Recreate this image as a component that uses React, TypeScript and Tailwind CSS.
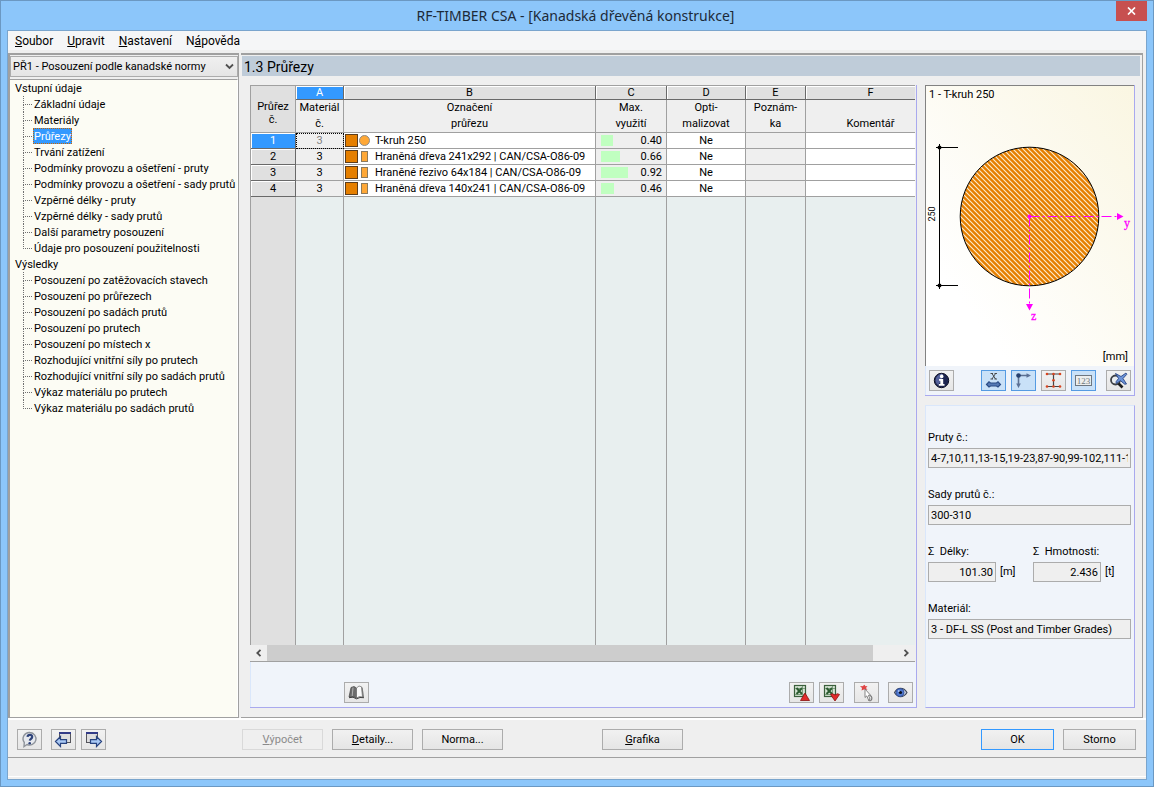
import React, { ReactNode, useState } from 'react';

const inputData = [
  'Základní údaje',
  'Materiály',
  'Průřezy',
  'Trvání zatížení',
  'Podmínky provozu a ošetření - pruty',
  'Podmínky provozu a ošetření - sady prutů',
  'Vzpěrné délky - pruty',
  'Vzpěrné délky - sady prutů',
  'Další parametry posouzení',
  'Údaje pro posouzení použitelnosti',
];

const results = [
  'Posouzení po zatěžovacích stavech',
  'Posouzení po průřezech',
  'Posouzení po sadách prutů',
  'Posouzení po prutech',
  'Posouzení po místech x',
  'Rozhodující vnitřní síly po prutech',
  'Rozhodující vnitřní síly po sadách prutů',
  'Výkaz materiálu po prutech',
  'Výkaz materiálu po sadách prutů',
];

const sections = [
  { material: 3, name: 'T-kruh 250', round: true, ratio: 0.4 },
  { material: 3, name: 'Hraněná dřeva 241x292 | CAN/CSA-O86-09', round: false, ratio: 0.66 },
  { material: 3, name: 'Hraněné řezivo 64x184 | CAN/CSA-O86-09', round: false, ratio: 0.92 },
  { material: 3, name: 'Hraněná dřeva 140x241 | CAN/CSA-O86-09', round: false, ratio: 0.46 },
];

const columns = [
  { letter: 'A', top: 'Materiál', bottom: 'č.' },
  { letter: 'B', top: 'Označení', bottom: 'průřezu' },
  { letter: 'C', top: 'Max.', bottom: 'využití' },
  { letter: 'D', top: 'Opti-', bottom: 'malizovat' },
  { letter: 'E', top: 'Poznám-', bottom: 'ka' },
  { letter: 'F', top: '\u00a0', bottom: 'Komentář' },
];

type IconButtonProps = {
  label: string;
  active?: boolean;
  className?: string;
  children: ReactNode;
};

const IconButton: React.FC<IconButtonProps> = ({ label, active = false, className = '', children }) => (
  <button
    type="button"
    aria-label={label}
    className={`flex h-[21px] w-[25px] shrink-0 items-center justify-center border ${
      active ? 'border-[#559be2] bg-[#c9e1f8]' : 'border-[#acacac] bg-linear-to-b from-[#f2f2f2] to-[#e6e6e6]'
    } ${className}`}
  >
    {children}
  </button>
);

type TextButtonProps = {
  className?: string;
  disabled?: boolean;
  primary?: boolean;
  children: ReactNode;
};

const TextButton: React.FC<TextButtonProps> = ({ className = '', disabled = false, primary = false, children }) => {
  const enabledBorder = primary ? 'border-[#3399ff]' : 'border-[#acacac]';

  return (
    <button
      type="button"
      disabled={disabled}
      className={`h-[21px] shrink-0 border text-center leading-5 ${
        disabled
          ? 'border-[#d9d9d9] bg-[#efefef] text-[#8a8a8a]'
          : `${enabledBorder} bg-linear-to-b from-[#f1f1f1] to-[#e5e5e5] text-black`
      } ${className}`}
    >
      {children}
    </button>
  );
};

/* Toolbar icons */

const InfoIcon = () => (
  <svg width="17" height="17" viewBox="0 0 17 17">
    <circle cx="8.5" cy="8.5" r="7.2" fill="#1d2550" stroke="#0c0f24" />
    <path d="M3 6a6 6 0 0 1 7-4l-2 7-3 4a6 6 0 0 1-2-7z" fill="#56639b" />
    <circle cx="8.7" cy="4.4" r="1.8" fill="#fff" />
    <path d="M6 7h4.200v5h1.300v1.800H5.800V12h1.500V8.800H6z" fill="#fff" />
  </svg>
);

const SupportXIcon = () => (
  <svg width="17" height="17" viewBox="0 0 17 17">
    <path d="M5.500 1.500h2.500M9.500 1.500h2.500M7 1.500l3.500 5.500M10.500 1.500L7 7M5.500 7h2.500M9.500 7h2.500" stroke="#3c3c3c" fill="none" strokeWidth=".9" />
    <path d="M1.500 12.500L4 9.800l1.500 1.200h6L13 9.800l2.500 2.700L13 15l-1.500-1h-6L4 15z" fill="#5579b4" stroke="#2b4c86" strokeWidth="1.200" />
  </svg>
);

const AxesIcon = () => (
  <svg width="17" height="17" viewBox="0 0 17 17">
    <path d="M3.500 3.500h9M3.500 3.500v9" stroke="#5c7192" strokeWidth="1.600" />
    <path d="M11.500 1.200L16 3.500 11.500 5.800zM1.200 11.500L3.500 16 5.800 11.500z" fill="#5b7196" />
    <circle cx="3.500" cy="3.500" r="2.300" fill="#27416f" />
  </svg>
);

const SectionIcon = () => (
  <svg width="17" height="17" viewBox="0 0 17 17">
    <path d="M1.500 2h14M1.500 14.500h14M8.500 2v12.500" stroke="#454545" strokeWidth="1.200" />
    <g fill="#d8441f">
      <circle cx="2" cy="2" r="1.300" />
      <circle cx="8.500" cy="2" r="1.300" />
      <circle cx="15" cy="2" r="1.300" />
      <circle cx="8.500" cy="8.300" r="1.300" />
      <circle cx="2" cy="14.500" r="1.300" />
      <circle cx="8.500" cy="14.500" r="1.300" />
      <circle cx="15" cy="14.500" r="1.300" />
    </g>
  </svg>
);

const NumbersIcon = () => (
  <svg width="17" height="13" viewBox="0 0 17 13">
    <rect x=".5" y="1.500" width="16" height="10" fill="#eceeee" stroke="#6d7680" />
    <text x="8.500" y="10" textAnchor="middle" fontSize="9" fill="#6d767e" className="font-['Liberation_Serif',serif]">
      123
    </text>
  </svg>
);

const ZoomAllIcon = () => (
  <svg width="19" height="17" viewBox="0 0 19 17">
    <circle cx="6.500" cy="8" r="4.500" fill="#e9edf0" stroke="#3c3f44" strokeWidth="1.800" />
    <path d="M9.500 11.500l4 4" stroke="#1c1c1c" strokeWidth="2.600" />
    <path d="M6.500 1.500l5.500 3 5-3.500.8 1.300-3.800 4.200 3.500 5.500-1.800.2-4.200-3.500-4.200 2.800-.3-1.700 2.500-3.300z" fill="#6d94d8" stroke="#2a4685" strokeWidth=".9" />
  </svg>
);

const LibraryIcon = () => (
  <svg width="17" height="15" viewBox="0 0 17 15">
    <path d="M1 12L3 2.500l3-1 2.500 1.500V13L5 11.500z" fill="#6d6d6d" stroke="#444" strokeWidth=".7" />
    <path d="M5 2.500L4.200 11" stroke="#b5b5b5" />
    <path d="M8.500 3l2.500-2 2.500.8L14.500 12l-3-.5-3 1.500z" fill="#fafafa" stroke="#666" strokeWidth=".7" />
    <path d="M13.500 2l1.200.8L16 12l-1.500.2z" fill="#777" />
    <path d="M1 12.700l4-.5 3.500 1.600L12 12.500l4 .2" stroke="#3e3e3e" fill="none" />
  </svg>
);

const ExcelIcon = ({ down = false }: { down?: boolean }) => (
  <svg width="18" height="18" viewBox="0 0 18 18">
    <rect x="1.500" y="1.500" width="11" height="11" fill="#d5e3d3" stroke="#3a5f3c" strokeWidth="1.200" />
    <path d="M2 4.500h10M2 10.500h10M9.500 2v10" stroke="#7f9f80" />
    <path d="M3.500 4l5.500 6M9 4l-5.500 6" stroke="#2c5c31" strokeWidth="1.900" />
    {down ? (
      <path d="M7.500 10.500l2-.8 2.500 1.300 2.500-1.300 2 .8L12 17z" fill="#e02b2b" stroke="#8c1010" strokeWidth=".8" />
    ) : (
      <path d="M12 9l4.500 7.500h-9z" fill="#e02b2b" stroke="#8c1010" strokeWidth=".8" />
    )}
  </svg>
);

const PickIcon = () => (
  <svg width="17" height="18" viewBox="0 0 17 18">
    <path d="M2 2l2.500.3L6.500.8l1 1.500 2-.3-1.500 2L9.500 6 6.500 5.300 3.500 6.500 4 4z" fill="#e04545" />
    <path d="M7 5v8.500l1.800-1.600 1.700 4 1.500-.8-1.600-3.800h2.200z" fill="#fff" stroke="#6a6a6a" strokeWidth=".8" />
    <path d="M12 11.500c2.200.8 2.500 3.500.8 5-1 .5-2 .3-2.300-.6" stroke="#777" fill="none" strokeWidth="1.200" />
  </svg>
);

const EyeIcon = () => (
  <svg width="15" height="13" viewBox="0 0 15 13">
    <path d="M1.500 6.500C3.500 3.200 5 2.300 7.500 2.300S12 3.200 14 6.500C12 9.800 10 10.700 7.500 10.700S3.500 9.800 1.500 6.500z" fill="#c3cbdb" stroke="#3a4254" strokeWidth="1.100" />
    <circle cx="7" cy="6.500" r="4" fill="#4f79d0" stroke="#2c4a93" strokeWidth=".8" />
    <circle cx="7.500" cy="6.500" r="1.600" fill="#0b1020" />
    <circle cx="5.800" cy="5" r=".8" fill="#dbe8ff" />
  </svg>
);

const HelpIcon = () => (
  <svg width="17" height="17" viewBox="0 0 17 17">
    <path d="M9 1.500a6.300 6.300 0 1 1-3 12L3 15.500l.3-4A6.300 6.300 0 0 1 9 1.500z" fill="#e6e9ee" stroke="#8f949b" strokeWidth="1.400" />
    <path d="M6.500 5.800C6.800 3.200 11.300 3.200 11.200 5.900 11.100 7.800 8.900 7.800 8.800 9.600" stroke="#2f437a" strokeWidth="2.200" fill="none" />
    <circle cx="8.700" cy="12.300" r="1.300" fill="#2f437a" />
  </svg>
);

const WindowArrowIcon = ({ forward = false }: { forward?: boolean }) => (
  <svg width="19" height="17" viewBox="0 0 19 17">
    <rect x={forward ? 2.5 : 5.5} y="1.500" width="11" height="10" fill="#dededf" stroke="#55555c" />
    <path d={forward ? 'M2 2h12' : 'M5 2h12'} stroke="#333c88" strokeWidth="2" />
    <path
      d={forward ? 'M17.500 10.500L12.500 5.500v3.200H6.500v3.600h6V15.500z' : 'M1.500 10.500l5-5v3.200h6v3.600h-6V15.500z'}
      fill="#a9c9f5"
      stroke="#28437f"
      strokeWidth="1.200"
    />
  </svg>
);

/* Cross-section preview: a round timber section with its diameter and local axes */
const SectionDrawing = () => (
  <svg viewBox="0 0 208 246" className="min-h-0 w-full flex-1" role="img" aria-label="T-kruh 250">
    <defs>
      <pattern id="hatch" width="5" height="5" patternUnits="userSpaceOnUse">
        <rect width="5" height="5" fill="#e57f00" />
        <path d="M-1-1l7 7M-1 4l2 2M4-1l2 2" stroke="#ffedd0" strokeWidth="1.100" />
      </pattern>
    </defs>
    <circle cx="103.500" cy="114.500" r="69.300" fill="url(#hatch)" stroke="#000" />
    <path d="M13.500 42v145M10 45.500h22M10 183.500h22" stroke="#000" fill="none" />
    <circle cx="13.500" cy="45.500" r="2" />
    <circle cx="13.500" cy="183.500" r="2" />
    <text transform="translate(9 112) rotate(-90)" textAnchor="middle" fontSize="9">
      250
    </text>
    <g stroke="#f0f" fill="none" strokeDasharray="10 3 2 3">
      <path d="M103.500 114.500h88M103.500 114.500v90" />
    </g>
    <g fill="#f0f">
      <circle cx="103.500" cy="114.500" r="2" />
      <path d="M191 111l6.500 3.500-6.500 3.500zM100 202h7l-3.500 6.500z" />
      <g fontSize="12" stroke="#f0f" strokeWidth=".3" className="font-['Liberation_Serif',serif]">
        <text x="198" y="125">y</text>
        <text x="105" y="218">z</text>
      </g>
    </g>
  </svg>
);

type TreeBranchProps = {
  title: string;
  items: string[];
  selected: string;
  onSelect: (item: string) => void;
};

const TreeBranch: React.FC<TreeBranchProps> = ({ title, items, selected, onSelect }) => (
  <li>
    <div className="h-4 pl-[5px] leading-[18px]">{title}</div>
    <ul className="pl-[13px]">
      {items.map((item, i) => (
        <li key={item} className="flex h-4">
          <span className="w-[9px] shrink-0">
            <span className="block h-[9px] border-b border-l border-dotted border-[#707070]" />
            {i < items.length - 1 && <span className="block h-[7px] border-l border-dotted border-[#707070]" />}
          </span>
          <a
            href="#"
            onClick={(e) => {
              e.preventDefault();
              onSelect(item);
            }}
            className={`ml-px h-4 border border-dotted leading-4 whitespace-nowrap ${
              item === selected ? 'border-[#cc6600] bg-[#3399ff] text-white' : 'border-transparent'
            }`}
          >
            {item}
          </a>
        </li>
      ))}
    </ul>
  </li>
);

type FieldProps = {
  id: string;
  label: string;
  value: string;
  unit?: string;
};

const Field: React.FC<FieldProps> = ({ id, label, value, unit }) => (
  <div className={unit ? 'w-[105px] shrink-0' : 'w-full'}>
    <label htmlFor={id} className="mb-[2px] block h-[17px] leading-[18px] whitespace-pre">{label}</label>
    <div className="flex items-center gap-1">
      <input
        id={id}
        readOnly
        value={value}
        className={`h-5 border border-[#acacac] bg-[#efefef] px-[2px] ${unit ? 'w-[68px] text-right' : 'w-full'}`}
      />
      {unit && <span>[{unit}]</span>}
    </div>
  </div>
);

const SectionsTable: React.FC = () => {
  const cell = 'h-4 border-b border-r border-[#a0a0a0] p-0';

  return (
    <table className="h-full w-full table-fixed border-separate border-spacing-0 border-t border-l border-[#a0a0a0] bg-[#e8efef]">
      <colgroup>
        <col className="w-[45px]" />
        <col className="w-[48px]" />
        <col className="w-[252px]" />
        <col className="w-[71px]" />
        <col className="w-[79px]" />
        <col className="w-[60px]" />
        <col />
      </colgroup>
      <thead>
        <tr>
          <th rowSpan={2} className="border-r border-b border-[#a0a0a0] bg-[#e0e0e0] p-0 pt-2 leading-[13px] font-normal">
            Průřez<br />č.
          </th>
          {columns.map((col) => (
            <th
              key={col.letter}
              className={`h-[14px] border-b border-[#696969] p-0 leading-[13px] font-normal shadow-[inset_1px_1px_0_#fff] ${
                col.letter === 'A' ? 'bg-[#3399ff] text-white' : 'bg-[#e0e0e0]'
              } ${col.letter === 'F' ? 'pl-5' : 'border-r'}`}
            >
              {col.letter}
            </th>
          ))}
        </tr>
        <tr>
          {columns.map((col) => (
            <th
              key={col.letter}
              className={`h-[33px] border-b border-[#a0a0a0] bg-[#efefef] p-0 leading-4 font-normal ${
                col.letter === 'F' ? 'pl-5' : 'border-r'
              }`}
            >
              {col.top}<br />{col.bottom}
            </th>
          ))}
        </tr>
      </thead>
      <tbody>
        {sections.map((row, i) => (
          <tr key={i}>
            <th
              scope="row"
              className={`h-4 border-r border-b border-[#696969] p-0 leading-[15px] font-normal shadow-[inset_1px_1px_0_#fff] ${
                i === 0 ? 'bg-[#3399ff] text-white' : 'bg-[#e0e0e0]'
              }`}
            >
              {i + 1}
            </th>
            <td
              className={`${cell} bg-[#efefef] text-center leading-[15px] ${
                i === 0 ? 'text-[#808080] outline-1 -outline-offset-1 outline-black outline-dotted' : ''
              }`}
            >
              {row.material}
            </td>
            <td className={`${cell} bg-white`}>
              <div className="flex h-[15px] items-center pl-px leading-[15px] whitespace-nowrap">
                <span className="h-[13px] w-[13px] border border-[#5c3d1c] bg-[#e57f00]" />
                <span className="flex w-[17px] pl-px">
                  {row.round ? (
                    <span className="h-[11px] w-[11px] rounded-full border border-[#8c8c8c] bg-[#ffa836]" />
                  ) : (
                    <span className="ml-[2px] h-[11px] w-[7px] border border-[#8c7a5c] bg-[#ffa836]" />
                  )}
                </span>
                {row.name}
              </div>
            </td>
            <td className={`${cell} bg-[#efefef]`}>
              <div className="flex h-[15px] items-center justify-between pr-1 pl-[5px] leading-[15px]">
                <span className="h-[11px] bg-[#c0ffc0]" style={{ width: Math.round(row.ratio * 29) }} />
                {row.ratio.toFixed(2)}
              </div>
            </td>
            <td className={`${cell} bg-white text-center leading-[15px]`}>Ne</td>
            <td className={`${cell} bg-[#efefef]`} />
            <td className="h-4 border-b border-[#a0a0a0] bg-white p-0" />
          </tr>
        ))}
        {/* empty rest of the grid */}
        <tr>
          <td className="border-r border-[#a0a0a0] bg-[#e0e0e0] p-0" />
          {columns.map((col) => (
            <td key={col.letter} className={`border-[#a0a0a0] p-0 ${col.letter === 'F' ? '' : 'border-r'}`} />
          ))}
        </tr>
      </tbody>
    </table>
  );
};

const App: React.FC = () => {
  const [selected, setSelected] = useState('Průřezy');

  return (
    <div className="flex h-screen w-full flex-col border border-[#6b98c2] bg-[#8cc6fa] px-[6px] pb-[6px] font-['Roboto','Liberation_Sans',sans-serif] text-[11px] leading-4 text-black">
      <header className="flex h-[29px] shrink-0 items-start">
        <h1 className="flex-1 pl-7 text-center font-['Noto_Sans',sans-serif] text-[14px] leading-[29px] text-[#1c2a38]">
          RF-TIMBER CSA - [Kanadská dřevěná konstrukce]
        </h1>
        <button type="button" aria-label="Zavřít" className="flex h-5 w-[31px] items-center justify-center bg-[#c75050]">
          <svg width="9" height="8" viewBox="0 0 9 8">
            <path d="M1 .5l7 7M8 .5l-7 7" stroke="#fff" strokeWidth="1.700" />
          </svg>
        </button>
      </header>

      <div className="flex min-h-0 flex-1 flex-col border border-[#7aa5cd] bg-[#efefef]">
        <nav className="flex h-[19px] shrink-0 gap-[14px] bg-[#f5f6f7] pl-[7px] text-[12px] leading-[20px]">
          <a href="#"><u>S</u>oubor</a>
          <a href="#"><u>U</u>pravit</a>
          <a href="#"><u>N</u>astavení</a>
          <a href="#">N<u>á</u>pověda</a>
        </nav>

        <div className="flex min-h-0 flex-1 gap-[2px] border-b-2 border-white pt-[3px] pr-[3px]">
          <aside className="flex w-[231px] shrink-0 flex-col border-t-2 border-r border-b border-l-2 border-[#a0a0a0]">
            <div className="relative mt-px">
              <select
                aria-label="Případ posouzení"
                className="block h-[21px] w-full appearance-none border border-[#acacac] bg-linear-to-b from-[#f0f0f0] to-[#e5e5e5] pt-px pl-[2px] outline-none"
              >
                <option>PŘ1 - Posouzení podle kanadské normy</option>
              </select>
              <svg width="9" height="7" viewBox="0 0 9 7" className="pointer-events-none absolute top-[7px] right-1">
                <path d="M1 1.500l3.500 3.500L8 1.500" stroke="#505050" strokeWidth="1.800" fill="none" />
              </svg>
            </div>
            <ul className="mt-[2px] flex-1 border-t border-r border-[#a0a0a0] border-r-white bg-[#fcfcf4]">
              <TreeBranch title="Vstupní údaje" items={inputData} selected={selected} onSelect={setSelected} />
              <TreeBranch title="Výsledky" items={results} selected={selected} onSelect={setSelected} />
            </ul>
          </aside>

          <main className="flex min-w-0 flex-1 flex-col border-t-2 border-r border-b border-[#a0a0a0]">
            <h2 className="mt-px mr-[2px] ml-px h-5 shrink-0 bg-[#bfccd9] pl-[2px] text-[14px] leading-[22px]">1.3 Průřezy</h2>
            <div className="mt-[9px] mb-[9px] flex min-h-0 flex-1 gap-2 pr-[7px] pl-[9px]">
              <section className="flex min-w-0 flex-1 flex-col border-r border-b border-[#a9a9ee]">
                <div className="min-h-0 flex-1 pr-px">
                  <SectionsTable />
                </div>
                <div className="mr-px flex h-[17px] shrink-0 border-b border-[#a0a0a0]">
                  <button type="button" aria-label="Posunout doleva" className="flex w-[17px] shrink-0 items-center justify-center">
                    <svg width="7" height="8" viewBox="0 0 7 8">
                      <path d="M5.500.8L2.300 4l3.200 3.200" stroke="#505050" strokeWidth="1.800" fill="none" />
                    </svg>
                  </button>
                  <div className="flex-1"><div className="h-full w-[96%] bg-[#cdcdcd]" /></div>
                  <button type="button" aria-label="Posunout doprava" className="flex w-[17px] shrink-0 items-center justify-center">
                    <svg width="7" height="8" viewBox="0 0 7 8">
                      <path d="M1.500.8L4.700 4 1.500 7.200" stroke="#505050" strokeWidth="1.800" fill="none" />
                    </svg>
                  </button>
                </div>
                <div className="flex h-[45px] shrink-0 border-l border-[#dae7fb] bg-[#f0f4fa] pt-5 pr-[3px] pl-[93px]">
                  <IconButton label="Knihovna průřezů"><LibraryIcon /></IconButton>
                  <IconButton label="Export do Excelu" className="ml-auto"><ExcelIcon /></IconButton>
                  <IconButton label="Import z Excelu" className="ml-[5px]"><ExcelIcon down /></IconButton>
                  <IconButton label="Vybrat v grafice" className="ml-[10px]"><PickIcon /></IconButton>
                  <IconButton label="Zobrazit" className="ml-[9px]"><EyeIcon /></IconButton>
                </div>
              </section>

              <aside className="flex w-[210px] shrink-0 flex-col gap-[9px]">
                <section className="flex h-[311px] shrink-0 flex-col border-r border-b border-[#a9a9ee]">
                  <div className="flex min-h-0 flex-1 flex-col border-t border-l border-[#828282] bg-linear-to-tr from-white from-20% to-[#faf6e2]">
                    <p className="h-4 pl-[3px] leading-[18px]">1 - T-kruh 250</p>
                    <SectionDrawing />
                    <p className="h-[18px] pr-[6px] text-right leading-[18px]">[mm]</p>
                  </div>
                  <div className="flex h-[29px] shrink-0 border-l border-[#dae7fb] bg-[#f0f4fa] pt-1 pr-[3px] pl-[3px]">
                    <IconButton label="Informace o průřezu"><InfoIcon /></IconButton>
                    <div className="mr-[10px] ml-auto flex gap-[5px]">
                      <IconButton label="Osy x" active><SupportXIcon /></IconButton>
                      <IconButton label="Kóty a osy" active><AxesIcon /></IconButton>
                      <IconButton label="Body napětí"><SectionIcon /></IconButton>
                      <IconButton label="Číslování" active><NumbersIcon /></IconButton>
                    </div>
                    <IconButton label="Zobrazit vše"><ZoomAllIcon /></IconButton>
                  </div>
                </section>

                <section className="flex min-h-0 flex-1 flex-col gap-[18px] border border-[#a9a9ee] border-t-[#dae7fb] border-l-[#dae7fb] bg-[#f0f4fa] pt-[23px] pr-[3px] pl-[2px]">
                  <Field id="members" label="Pruty č.:" value="4-7,10,11,13-15,19-23,87-90,99-102,111-116" />
                  <Field id="sets" label="Sady prutů č.:" value="300-310" />
                  <div className="flex">
                    <Field id="length" label="Σ  Délky:" value="101.30" unit="m" />
                    <Field id="mass" label="Σ  Hmotnosti:" value="2.436" unit="t" />
                  </div>
                  <Field id="material" label="Materiál:" value="3 - DF-L SS (Post and Timber Grades)" />
                </section>
              </aside>
            </div>
          </main>
        </div>

        <footer className="shrink-0">
          <div className="flex h-[38px] border-b border-[#a0a0a0] pt-[9px] pr-[10px] pl-[9px]">
            <IconButton label="Nápověda"><HelpIcon /></IconButton>
            <IconButton label="Předchozí dialog" className="ml-[9px]"><WindowArrowIcon /></IconButton>
            <IconButton label="Další dialog" className="ml-[5px]"><WindowArrowIcon forward /></IconButton>
            <div className="ml-[136px] flex gap-[9px]">
              <TextButton className="w-[81px]" disabled><u>V</u>ýpočet</TextButton>
              <TextButton className="w-[81px]"><u>D</u>etaily...</TextButton>
              <TextButton className="w-[81px]">Norma...</TextButton>
            </div>
            <TextButton className="ml-[99px] w-[81px]"><u>G</u>rafika</TextButton>
            <div className="ml-auto flex gap-[9px]">
              <TextButton className="w-[73px]" primary>OK</TextButton>
              <TextButton className="w-[73px]">Storno</TextButton>
            </div>
          </div>
          <div className="mb-[2px] h-[19px] border-b border-white" />
        </footer>
      </div>
    </div>
  );
};

export default App;
